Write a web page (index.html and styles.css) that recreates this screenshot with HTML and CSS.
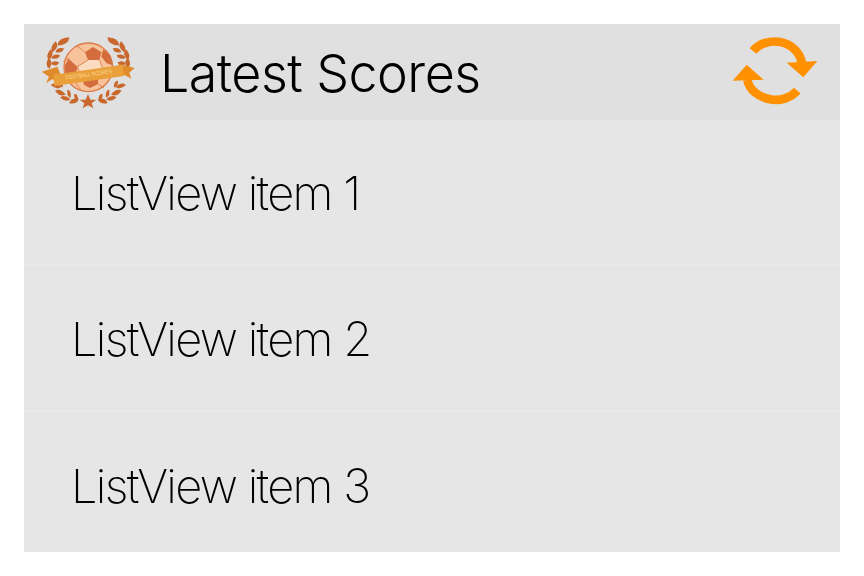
FILE: index.html
```html
<!DOCTYPE html>
<html lang="en">
<head>
<meta charset="utf-8">
<title>Latest Scores</title>
<link rel="stylesheet" href="styles.css">
</head>
<body>
<main class="panel">
  <header class="bar">
    <svg class="logo" viewBox="0 0 390 288" aria-hidden="true">
      <defs>
        <path id="lf" d="M-1 0Q-.3-1.1 1 0Q.3 1.1-1 0Z"/>
      </defs>
      <g class="leaf">
        <g id="laurel">
          <use href="#lf" transform="translate(118 52) rotate(-35) scale(22 17)"/>
          <use href="#lf" transform="translate(91 68) rotate(-75) scale(17 14)"/>
          <use href="#lf" transform="translate(107 79) rotate(-25) scale(14 12)"/>
          <use href="#lf" transform="translate(78 92) rotate(-80) scale(17 14)"/>
          <use href="#lf" transform="translate(95 98) rotate(-20) scale(14 12)"/>
          <use href="#lf" transform="translate(75 118) rotate(-95) scale(16 14)"/>
          <use href="#lf" transform="translate(93 118) rotate(-10) scale(13 12)"/>
          <use href="#lf" transform="translate(96 186) rotate(10) scale(16 12)"/>
          <use href="#lf" transform="translate(109 206) rotate(20) scale(17 13)"/>
          <use href="#lf" transform="translate(124 223) rotate(10) scale(16 12)"/>
          <use href="#lf" transform="translate(150 231) rotate(-25) scale(16 13)"/>
          <use href="#lf" transform="translate(110 180) rotate(60) scale(12 10)"/>
          <use href="#lf" transform="translate(135 209) rotate(70) scale(13 10)"/>
          <use href="#lf" transform="translate(156 219) rotate(60) scale(11 10)"/>
        </g>
        <use href="#laurel" transform="matrix(-1 0 0 1 386 0)"/>
      </g>
      <circle class="ball" cx="193" cy="130" r="73"/>
      <polygon class="light" points="160,128 192,108 226,108 238,138 222,166 176,166"/>
      <g class="seam">
        <path d="M183 85L160 66M232 85L252 82M160 128L192 108M226 108L238 138L262 128M238 138L222 166M160 128L176 166M135 103L118 112M152 172L172 200M222 180L240 192"/>
      </g>
      <g class="patch">
        <polygon points="183,85 207,69 232,85 226,108 192,108"/>
        <polygon points="134,104 160,128 152,170 125,152 122,125"/>
        <polygon points="238,76 258,94 266,124 248,118 232,98"/>
        <polygon points="176,166 222,166 222,180 198,192 180,182"/>
      </g>
      <polygon class="tail" points="53,143 100,128 120,176 84,166 66,178 75,158"/>
      <polygon class="tail" points="332,132 285,120 262,160 300,152 322,164 316,146"/>
      <polygon class="band" points="88,152 297,122 300,156 91,186"/>
      <text class="brand" x="195" y="157" textLength="140" lengthAdjust="spacingAndGlyphs" transform="rotate(-8 195 157)">FOOTBALL SCORES</text>
      <polygon class="star" points="192,210 199,227 217,227 203,238 208,253 192,244 176,253 181,238 167,227 185,227"/>
    </svg>
    <h1 class="title">Latest Scores</h1>
    <svg class="refresh" viewBox="0 0 360 288" aria-hidden="true">
      <path class="arc" d="M99 81C118 58 150 49 180 54C215 60 240 85 246 118"/>
      <polygon class="head" points="200,116 292,111 250,160"/>
      <path class="arc" d="M232 200C212 222 180 232 150 226C115 219 88 198 82 168"/>
      <polygon class="head" points="38,170 80,122 131,167"/>
    </svg>
  </header>
  <ul class="list">
    <li class="row">ListView item 1</li>
    <li class="row">ListView item 2</li>
    <li class="row">ListView item 3</li>
  </ul>
</main>
</body>
</html>
```
FILE: styles.css
```css
* { box-sizing: border-box; }
html, body { margin: 0; height: 100%; background: #fff; }
body { padding: 24px; font-family: Inter, "Liberation Sans", sans-serif; color: #000; }
.panel { display: flex; flex-direction: column; height: 528px; overflow: hidden; background: #e6e6e6; }
.bar { display: flex; align-items: center; height: 96px; flex: none; background: #e0e0e0; }
.logo { width: 130px; height: 96px; flex: none; }
.title { flex: 1; margin: 0 0 0 6px; padding-top: 4px; font-size: 52px; font-weight: 300; letter-spacing: -0.55px; line-height: 92px; will-change: opacity; }
.refresh { width: 120px; height: 96px; flex: none; }
.arc { fill: none; stroke: #ff9100; stroke-width: 26; }
.head { fill: #ff9100; }
.leaf { fill: #c9682d; }
.ball { fill: #f8c29a; stroke: #dd7a45; stroke-width: 4; }
.light { fill: #fbdcc0; }
.seam { stroke: #e08552; stroke-width: 3; fill: none; }
.patch { fill: #d56c3e; }
.tail { fill: #e08c2c; }
.band { fill: #eaa03a; }
.brand { font-family: "Liberation Sans", sans-serif; font-size: 17px; fill: #fbdc9c; text-anchor: middle; }
.star { fill: #c9682d; }
.list { display: block; flex: none; height: 438px; margin: 0; padding: 0; list-style: none; }
.row { display: flex; align-items: center; height: 146px; padding: 1px 0 0 47px; font-size: 47px; font-weight: 200; letter-spacing: -1.7px; border-bottom: 2px solid #e9e9e9; will-change: opacity; }
.row:last-child { border-bottom: none; }
```
